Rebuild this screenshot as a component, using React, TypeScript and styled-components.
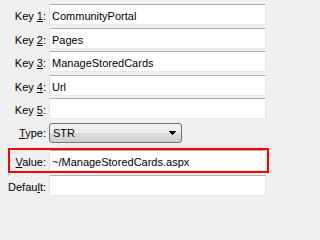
import React from "react";
import styled, { createGlobalStyle } from "styled-components";

const Global = createGlobalStyle`
  html, body {
    margin: 0;
    padding: 0;
    background: #f0f0f0;
    min-height: 100%;
  }
  body {
    font-family: "Liberation Sans", Arial, sans-serif;
    font-size: 11px;
    color: #000;
  }
`;

const Form = styled.div`
  display: flex;
  flex-direction: column;
  padding-top: 4px;
  margin-left: 8px;
  width: 261px;
`;

const Row = styled.div<{ $mt?: number; $highlight?: boolean }>`
  display: flex;
  align-items: flex-start;
  gap: 3px;
  margin-top: ${(p) => p.$mt ?? 0}px;
  ${(p) =>
    p.$highlight
      ? `border: 2px solid #ff0000; padding-right: 1px;`
      : `margin-left: 2px; margin-right: 3px;`}
`;

const Label = styled.div<{ $pt?: number; $lh?: number }>`
  flex: 0 0 36px;
  width: 36px;
  display: flex;
  justify-content: flex-end;
  white-space: nowrap;
  padding-top: ${(p) => p.$pt ?? 3}px;
  line-height: ${(p) => p.$lh ?? 18}px;
  u {
    text-decoration: underline;
    text-underline-offset: 1px;
  }
`;

const TextInput = styled.input`
  flex: 1 1 auto;
  min-width: 0;
  box-sizing: border-box;
  height: 21px;
  margin: 0;
  padding: 3px 2px 0 2px;
  border: 1px solid;
  border-color: #abadb3 #e3e9ef #e3e9ef #e2e3ea;
  border-radius: 1px;
  background: #fff;
  font-family: "Liberation Sans", Arial, sans-serif;
  font-size: 11px;
  color: #000;
  outline: none;
`;

const Combo = styled.div`
  box-sizing: border-box;
  width: 133px;
  height: 20px;
  display: flex;
  align-items: center;
  justify-content: space-between;
  padding: 0 5px 0 3px;
  border: 1px solid #707070;
  border-radius: 3px;
  background: linear-gradient(#f2f2f2 0%, #ebebeb 50%, #dddddd 50%, #cfcfcf 100%);
  line-height: 18px;
`;

const Arrow = () => (
  <svg width="7" height="4" viewBox="0 0 7 4" shapeRendering="crispEdges">
    <polygon points="0,0 7,0 3.5,4" fill="#000" />
  </svg>
);

const keys = [
  { n: "1", v: "CommunityPortal" },
  { n: "2", v: "Pages" },
  { n: "3", v: "ManageStoredCards" },
  { n: "4", v: "Url" },
  { n: "5", v: "" },
];

export default function App() {
  return (
    <>
      <Global />
      <Form>
        {keys.map((k, i) => (
          <Row key={k.n} $mt={i === 0 ? 0 : 2.5}>
            <Label>
              <span>
                Key <u>{k.n}</u>:
              </span>
            </Label>
            <TextInput defaultValue={k.v} />
          </Row>
        ))}
        <Row $mt={4}>
          <Label $pt={0} $lh={20}>
            <span>
              <u>T</u>ype:
            </span>
          </Label>
          <Combo>
            <span>STR</span>
            <Arrow />
          </Combo>
        </Row>
        <Row $mt={5} $highlight>
          <Label>
            <span>
              <u>V</u>alue:
            </span>
          </Label>
          <TextInput defaultValue="~/ManageStoredCards.aspx" />
        </Row>
        <Row $mt={2}>
          <Label>
            <span>
              Defau<u>l</u>t:
            </span>
          </Label>
          <TextInput defaultValue="" />
        </Row>
      </Form>
    </>
  );
}
